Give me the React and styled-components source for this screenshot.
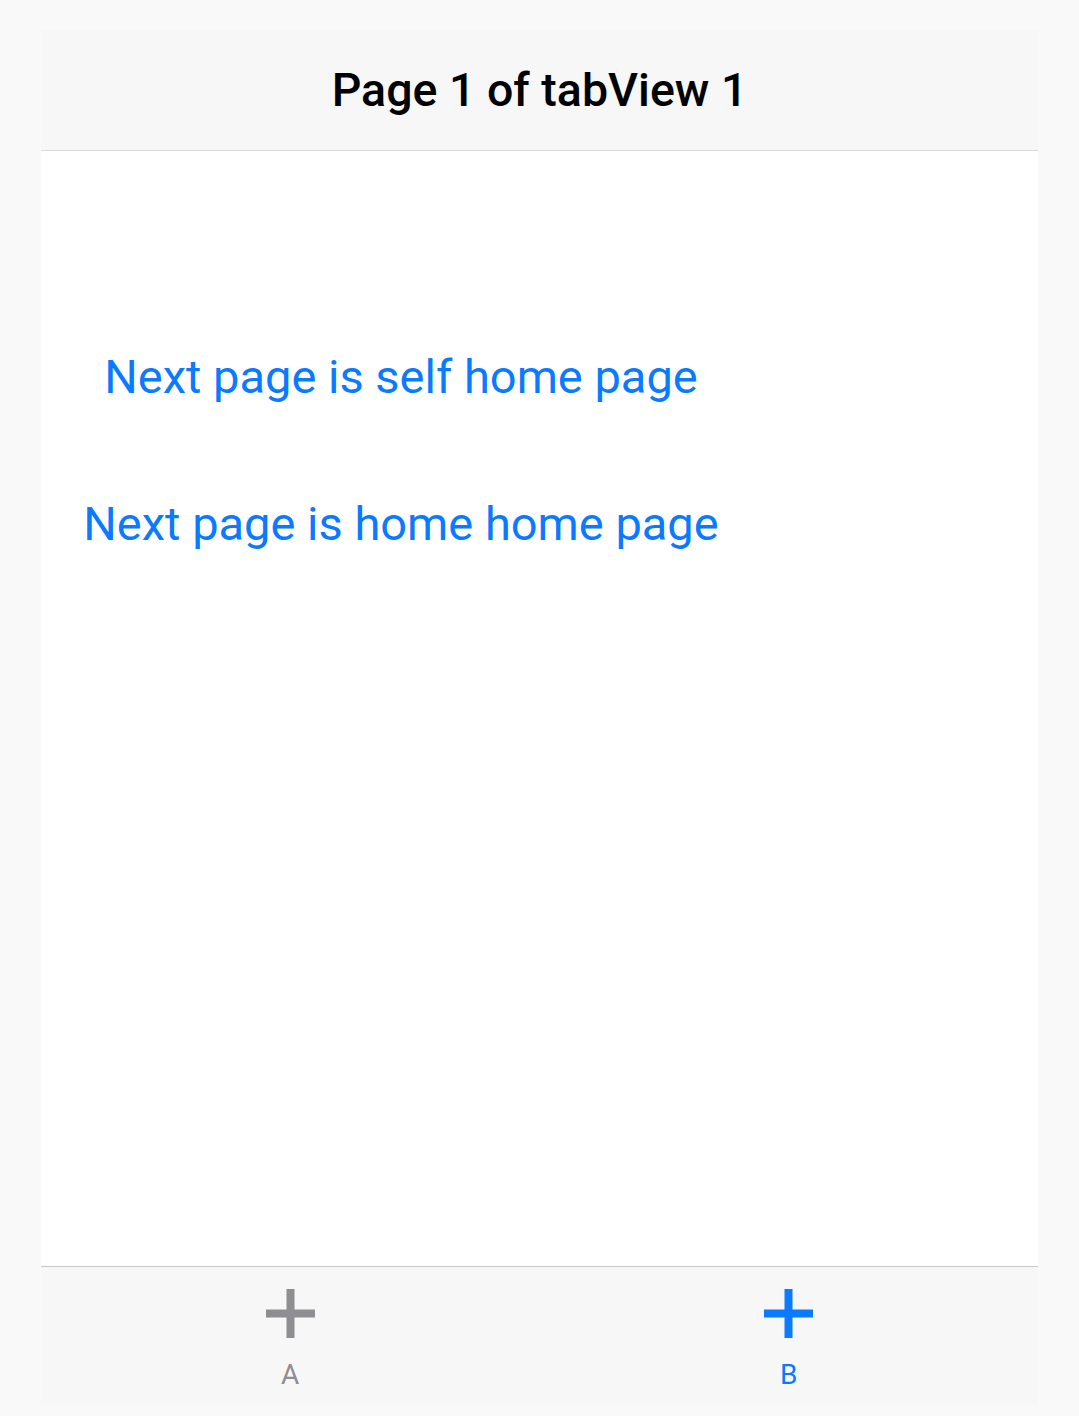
import React from "react";
import styled, { createGlobalStyle } from "styled-components";

const Global = createGlobalStyle`
  html, body { margin: 0; padding: 0; background: #f9f9f9; }
  body { font-family: Roboto, "Liberation Sans", sans-serif; }
`;

const Page = styled.div`
  padding: 30px 41px 0 41px;
  background: #f9f9f9;
  min-height: 1416px;
  box-sizing: border-box;
`;

const Frame = styled.div`
  display: flex;
  flex-direction: column;
  width: 997px;
`;

const Header = styled.header`
  height: 120px;
  display: flex;
  align-items: center;
  justify-content: center;
  background: #f7f7f7;
  border-bottom: 1px solid #d9d9d9;
`;

const Title = styled.h1`
  margin: 0;
  font-family: Roboto, "Liberation Sans", sans-serif;
  font-weight: 500;
  font-size: 46.5px;
  line-height: 48px;
  color: #000;
`;

const Body = styled.main`
  height: 1115px;
  background: #fff;
  display: flex;
  flex-direction: column;
  padding-top: 202px;
  box-sizing: border-box;
  gap: 100px;
`;

const LinkButton = styled.button`
  width: 720px;
  border: none;
  background: none;
  padding: 0;
  margin: 0;
  text-align: center;
  font-family: Roboto, "Liberation Sans", sans-serif;
  font-size: 47px;
  line-height: 47px;
  color: #0a7aff;
  cursor: pointer;
`;

const TabBar = styled.nav`
  height: 137px;
  display: grid;
  grid-template-columns: 1fr 1fr;
  background: #f7f7f7;
  border-top: 1px solid #c8c8c8;
`;

const Tab = styled.div`
  display: flex;
  flex-direction: column;
  align-items: center;
  padding-top: 22px;
  color: ${(p) => (p.$active ? "#0a7aff" : "#8e8e93")};
`;

const TabLabel = styled.span`
  margin-top: 23px;
  font-family: Roboto, "Liberation Sans", sans-serif;
  font-size: 28px;
  line-height: 28px;
`;

const PlusIcon = () => (
  <svg width="49" height="49" viewBox="0 0 49 49" fill="currentColor">
    <rect x="0" y="20.5" width="49" height="8" />
    <rect x="20.5" y="0" width="8" height="49" />
  </svg>
);

export default function App() {
  return (
    <>
      <Global />
      <Page>
        <Frame>
          <Header>
            <Title>Page 1 of tabView 1</Title>
          </Header>
          <Body>
            <LinkButton>Next page is self home page</LinkButton>
            <LinkButton>Next page is home home page</LinkButton>
          </Body>
          <TabBar>
            <Tab>
              <PlusIcon />
              <TabLabel>A</TabLabel>
            </Tab>
            <Tab $active>
              <PlusIcon />
              <TabLabel>B</TabLabel>
            </Tab>
          </TabBar>
        </Frame>
      </Page>
    </>
  );
}
